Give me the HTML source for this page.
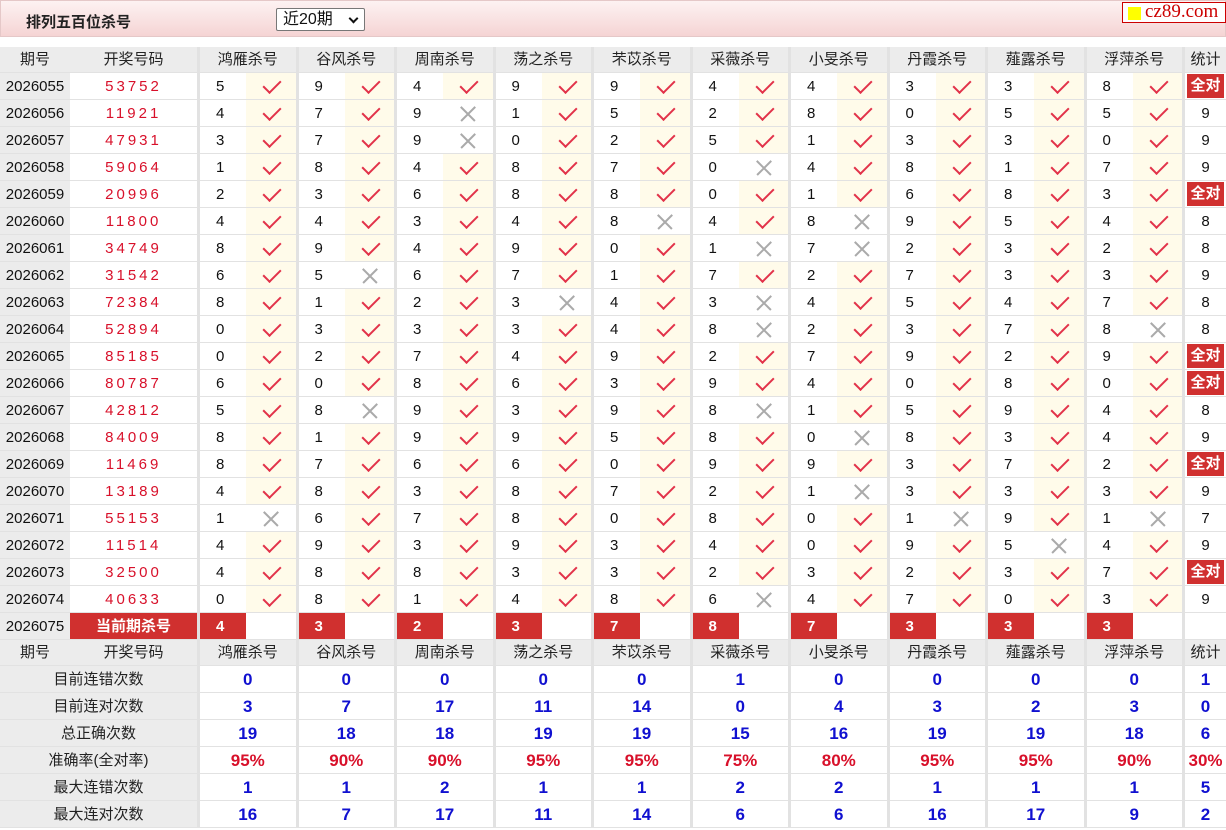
<!DOCTYPE html>
<html><head><meta charset="utf-8"><style>
*{box-sizing:border-box;margin:0;padding:0}
body{width:1226px;height:830px;overflow:hidden;background:#fff;font-family:"Liberation Sans","Noto Sans CJK SC",sans-serif;font-size:15px;color:#111;position:relative}
.top{position:absolute;left:0;top:0;width:1226px;height:37px;background:linear-gradient(#fdf2f2,#f5d4d4);border:1px solid #e5c8c8}
.ttl{position:absolute;left:25px;top:10px;font-weight:bold;font-size:15px;color:#222}
.sel{position:absolute;left:275px;top:7px;width:89px;height:23px;border:1px solid #777;background:#fff;font-size:16px;padding-left:6px;line-height:21px;border-radius:2px}
.sel b{position:absolute;right:7px;top:6px;width:7px;height:7px;border-right:2px solid #111;border-bottom:2px solid #111;transform:rotate(45deg)}
.logo{position:absolute;left:1121px;top:1px;width:104px;height:21px;border:1px solid #c00;background:#fff;font-family:"Liberation Serif",serif;font-size:19px;color:#c00;line-height:18px;padding-left:22px}
.logo i{position:absolute;left:5px;top:4px;width:13px;height:13px;background:#ff0}
.tb{position:absolute;left:0;top:47px;width:1226px}
.r{display:flex;height:27px}
.r>div{height:27px;line-height:27px;text-align:center;border-bottom:1px solid #e2e2e2;position:relative;flex:none}
.h>div{background:#ececec;height:26px;line-height:26px;color:#222}
.h{height:26px}
.q{width:70px;background:#ececec}
.k{width:127px;color:#d8102a;letter-spacing:3px;background:#fff}
.n{width:49px;border-left:3px solid #e2e2e2;text-align:left!important;padding-left:16px}
.c{width:49.5px;background:#fffbea}
.x{width:49.5px;background:#fff}
.r>.t{flex:1;border-left:3px solid #e2e2e2}
.g{width:98.5px;border-left:3px solid #e2e2e2}
.hk{width:127px}
.c::after{content:"";position:absolute;left:21px;top:3px;width:8px;height:15px;border-right:2.5px solid #e2334a;border-bottom:2.5px solid #e2334a;transform:rotate(45deg)}
.x::before,.x::after{content:"";position:absolute;left:15px;top:13px;width:20px;height:1.5px;background:#aaa;transform:rotate(45deg)}
.x::after{transform:rotate(-45deg)}
.qd{display:inline-block;background:#d0302f;color:#fff;font-weight:bold;width:37px;height:24px;line-height:24px;margin-top:1px;vertical-align:top}
.cur .k{background:#d0302f;color:#fff;font-weight:bold;letter-spacing:0;width:130px;border-right:3px solid #e2e2e2}
.cur .n{background:#d0302f;color:#fff;font-weight:bold}
.cur .e{width:49.5px;background:#fff}
.s>div{font-weight:bold;color:#1010d0;font-size:17px}
.s .lb{width:197px;background:#ececec;color:#222;font-weight:normal;font-size:15px}
.s .g,.s .t{background:#fff}
.red>div{color:#d8102a}
</style></head><body>
<div class="top"><div class="ttl">排列五百位杀号</div><div class="sel">近20期<b></b></div><div class="logo"><i></i>cz89.com</div></div>
<div class="tb">
<div class="r h"><div class="q">期号</div><div class="hk">开奖号码</div><div class="g">鸿雁杀号</div><div class="g">谷风杀号</div><div class="g">周南杀号</div><div class="g">荡之杀号</div><div class="g">芣苡杀号</div><div class="g">采薇杀号</div><div class="g">小旻杀号</div><div class="g">丹霞杀号</div><div class="g">薤露杀号</div><div class="g">浮萍杀号</div><div class="t">统计</div></div>
<div class="r"><div class="q">2026055</div><div class="k">53752</div><div class="n">5</div><div class="c"></div><div class="n">9</div><div class="c"></div><div class="n">4</div><div class="c"></div><div class="n">9</div><div class="c"></div><div class="n">9</div><div class="c"></div><div class="n">4</div><div class="c"></div><div class="n">4</div><div class="c"></div><div class="n">3</div><div class="c"></div><div class="n">3</div><div class="c"></div><div class="n">8</div><div class="c"></div><div class="t"><span class="qd">全对</span></div></div>
<div class="r"><div class="q">2026056</div><div class="k">11921</div><div class="n">4</div><div class="c"></div><div class="n">7</div><div class="c"></div><div class="n">9</div><div class="x"></div><div class="n">1</div><div class="c"></div><div class="n">5</div><div class="c"></div><div class="n">2</div><div class="c"></div><div class="n">8</div><div class="c"></div><div class="n">0</div><div class="c"></div><div class="n">5</div><div class="c"></div><div class="n">5</div><div class="c"></div><div class="t">9</div></div>
<div class="r"><div class="q">2026057</div><div class="k">47931</div><div class="n">3</div><div class="c"></div><div class="n">7</div><div class="c"></div><div class="n">9</div><div class="x"></div><div class="n">0</div><div class="c"></div><div class="n">2</div><div class="c"></div><div class="n">5</div><div class="c"></div><div class="n">1</div><div class="c"></div><div class="n">3</div><div class="c"></div><div class="n">3</div><div class="c"></div><div class="n">0</div><div class="c"></div><div class="t">9</div></div>
<div class="r"><div class="q">2026058</div><div class="k">59064</div><div class="n">1</div><div class="c"></div><div class="n">8</div><div class="c"></div><div class="n">4</div><div class="c"></div><div class="n">8</div><div class="c"></div><div class="n">7</div><div class="c"></div><div class="n">0</div><div class="x"></div><div class="n">4</div><div class="c"></div><div class="n">8</div><div class="c"></div><div class="n">1</div><div class="c"></div><div class="n">7</div><div class="c"></div><div class="t">9</div></div>
<div class="r"><div class="q">2026059</div><div class="k">20996</div><div class="n">2</div><div class="c"></div><div class="n">3</div><div class="c"></div><div class="n">6</div><div class="c"></div><div class="n">8</div><div class="c"></div><div class="n">8</div><div class="c"></div><div class="n">0</div><div class="c"></div><div class="n">1</div><div class="c"></div><div class="n">6</div><div class="c"></div><div class="n">8</div><div class="c"></div><div class="n">3</div><div class="c"></div><div class="t"><span class="qd">全对</span></div></div>
<div class="r"><div class="q">2026060</div><div class="k">11800</div><div class="n">4</div><div class="c"></div><div class="n">4</div><div class="c"></div><div class="n">3</div><div class="c"></div><div class="n">4</div><div class="c"></div><div class="n">8</div><div class="x"></div><div class="n">4</div><div class="c"></div><div class="n">8</div><div class="x"></div><div class="n">9</div><div class="c"></div><div class="n">5</div><div class="c"></div><div class="n">4</div><div class="c"></div><div class="t">8</div></div>
<div class="r"><div class="q">2026061</div><div class="k">34749</div><div class="n">8</div><div class="c"></div><div class="n">9</div><div class="c"></div><div class="n">4</div><div class="c"></div><div class="n">9</div><div class="c"></div><div class="n">0</div><div class="c"></div><div class="n">1</div><div class="x"></div><div class="n">7</div><div class="x"></div><div class="n">2</div><div class="c"></div><div class="n">3</div><div class="c"></div><div class="n">2</div><div class="c"></div><div class="t">8</div></div>
<div class="r"><div class="q">2026062</div><div class="k">31542</div><div class="n">6</div><div class="c"></div><div class="n">5</div><div class="x"></div><div class="n">6</div><div class="c"></div><div class="n">7</div><div class="c"></div><div class="n">1</div><div class="c"></div><div class="n">7</div><div class="c"></div><div class="n">2</div><div class="c"></div><div class="n">7</div><div class="c"></div><div class="n">3</div><div class="c"></div><div class="n">3</div><div class="c"></div><div class="t">9</div></div>
<div class="r"><div class="q">2026063</div><div class="k">72384</div><div class="n">8</div><div class="c"></div><div class="n">1</div><div class="c"></div><div class="n">2</div><div class="c"></div><div class="n">3</div><div class="x"></div><div class="n">4</div><div class="c"></div><div class="n">3</div><div class="x"></div><div class="n">4</div><div class="c"></div><div class="n">5</div><div class="c"></div><div class="n">4</div><div class="c"></div><div class="n">7</div><div class="c"></div><div class="t">8</div></div>
<div class="r"><div class="q">2026064</div><div class="k">52894</div><div class="n">0</div><div class="c"></div><div class="n">3</div><div class="c"></div><div class="n">3</div><div class="c"></div><div class="n">3</div><div class="c"></div><div class="n">4</div><div class="c"></div><div class="n">8</div><div class="x"></div><div class="n">2</div><div class="c"></div><div class="n">3</div><div class="c"></div><div class="n">7</div><div class="c"></div><div class="n">8</div><div class="x"></div><div class="t">8</div></div>
<div class="r"><div class="q">2026065</div><div class="k">85185</div><div class="n">0</div><div class="c"></div><div class="n">2</div><div class="c"></div><div class="n">7</div><div class="c"></div><div class="n">4</div><div class="c"></div><div class="n">9</div><div class="c"></div><div class="n">2</div><div class="c"></div><div class="n">7</div><div class="c"></div><div class="n">9</div><div class="c"></div><div class="n">2</div><div class="c"></div><div class="n">9</div><div class="c"></div><div class="t"><span class="qd">全对</span></div></div>
<div class="r"><div class="q">2026066</div><div class="k">80787</div><div class="n">6</div><div class="c"></div><div class="n">0</div><div class="c"></div><div class="n">8</div><div class="c"></div><div class="n">6</div><div class="c"></div><div class="n">3</div><div class="c"></div><div class="n">9</div><div class="c"></div><div class="n">4</div><div class="c"></div><div class="n">0</div><div class="c"></div><div class="n">8</div><div class="c"></div><div class="n">0</div><div class="c"></div><div class="t"><span class="qd">全对</span></div></div>
<div class="r"><div class="q">2026067</div><div class="k">42812</div><div class="n">5</div><div class="c"></div><div class="n">8</div><div class="x"></div><div class="n">9</div><div class="c"></div><div class="n">3</div><div class="c"></div><div class="n">9</div><div class="c"></div><div class="n">8</div><div class="x"></div><div class="n">1</div><div class="c"></div><div class="n">5</div><div class="c"></div><div class="n">9</div><div class="c"></div><div class="n">4</div><div class="c"></div><div class="t">8</div></div>
<div class="r"><div class="q">2026068</div><div class="k">84009</div><div class="n">8</div><div class="c"></div><div class="n">1</div><div class="c"></div><div class="n">9</div><div class="c"></div><div class="n">9</div><div class="c"></div><div class="n">5</div><div class="c"></div><div class="n">8</div><div class="c"></div><div class="n">0</div><div class="x"></div><div class="n">8</div><div class="c"></div><div class="n">3</div><div class="c"></div><div class="n">4</div><div class="c"></div><div class="t">9</div></div>
<div class="r"><div class="q">2026069</div><div class="k">11469</div><div class="n">8</div><div class="c"></div><div class="n">7</div><div class="c"></div><div class="n">6</div><div class="c"></div><div class="n">6</div><div class="c"></div><div class="n">0</div><div class="c"></div><div class="n">9</div><div class="c"></div><div class="n">9</div><div class="c"></div><div class="n">3</div><div class="c"></div><div class="n">7</div><div class="c"></div><div class="n">2</div><div class="c"></div><div class="t"><span class="qd">全对</span></div></div>
<div class="r"><div class="q">2026070</div><div class="k">13189</div><div class="n">4</div><div class="c"></div><div class="n">8</div><div class="c"></div><div class="n">3</div><div class="c"></div><div class="n">8</div><div class="c"></div><div class="n">7</div><div class="c"></div><div class="n">2</div><div class="c"></div><div class="n">1</div><div class="x"></div><div class="n">3</div><div class="c"></div><div class="n">3</div><div class="c"></div><div class="n">3</div><div class="c"></div><div class="t">9</div></div>
<div class="r"><div class="q">2026071</div><div class="k">55153</div><div class="n">1</div><div class="x"></div><div class="n">6</div><div class="c"></div><div class="n">7</div><div class="c"></div><div class="n">8</div><div class="c"></div><div class="n">0</div><div class="c"></div><div class="n">8</div><div class="c"></div><div class="n">0</div><div class="c"></div><div class="n">1</div><div class="x"></div><div class="n">9</div><div class="c"></div><div class="n">1</div><div class="x"></div><div class="t">7</div></div>
<div class="r"><div class="q">2026072</div><div class="k">11514</div><div class="n">4</div><div class="c"></div><div class="n">9</div><div class="c"></div><div class="n">3</div><div class="c"></div><div class="n">9</div><div class="c"></div><div class="n">3</div><div class="c"></div><div class="n">4</div><div class="c"></div><div class="n">0</div><div class="c"></div><div class="n">9</div><div class="c"></div><div class="n">5</div><div class="x"></div><div class="n">4</div><div class="c"></div><div class="t">9</div></div>
<div class="r"><div class="q">2026073</div><div class="k">32500</div><div class="n">4</div><div class="c"></div><div class="n">8</div><div class="c"></div><div class="n">8</div><div class="c"></div><div class="n">3</div><div class="c"></div><div class="n">3</div><div class="c"></div><div class="n">2</div><div class="c"></div><div class="n">3</div><div class="c"></div><div class="n">2</div><div class="c"></div><div class="n">3</div><div class="c"></div><div class="n">7</div><div class="c"></div><div class="t"><span class="qd">全对</span></div></div>
<div class="r"><div class="q">2026074</div><div class="k">40633</div><div class="n">0</div><div class="c"></div><div class="n">8</div><div class="c"></div><div class="n">1</div><div class="c"></div><div class="n">4</div><div class="c"></div><div class="n">8</div><div class="c"></div><div class="n">6</div><div class="x"></div><div class="n">4</div><div class="c"></div><div class="n">7</div><div class="c"></div><div class="n">0</div><div class="c"></div><div class="n">3</div><div class="c"></div><div class="t">9</div></div>
<div class="r cur"><div class="q">2026075</div><div class="k">当前期杀号</div><div class="n" style="border-left:0;width:46px">4</div><div class="e"></div><div class="n">3</div><div class="e"></div><div class="n">2</div><div class="e"></div><div class="n">3</div><div class="e"></div><div class="n">7</div><div class="e"></div><div class="n">8</div><div class="e"></div><div class="n">7</div><div class="e"></div><div class="n">3</div><div class="e"></div><div class="n">3</div><div class="e"></div><div class="n">3</div><div class="e"></div><div class="t"></div></div>
<div class="r h"><div class="q">期号</div><div class="hk">开奖号码</div><div class="g">鸿雁杀号</div><div class="g">谷风杀号</div><div class="g">周南杀号</div><div class="g">荡之杀号</div><div class="g">芣苡杀号</div><div class="g">采薇杀号</div><div class="g">小旻杀号</div><div class="g">丹霞杀号</div><div class="g">薤露杀号</div><div class="g">浮萍杀号</div><div class="t">统计</div></div>
<div class="r s"><div class="lb">目前连错次数</div><div class="g">0</div><div class="g">0</div><div class="g">0</div><div class="g">0</div><div class="g">0</div><div class="g">1</div><div class="g">0</div><div class="g">0</div><div class="g">0</div><div class="g">0</div><div class="t">1</div></div>
<div class="r s"><div class="lb">目前连对次数</div><div class="g">3</div><div class="g">7</div><div class="g">17</div><div class="g">11</div><div class="g">14</div><div class="g">0</div><div class="g">4</div><div class="g">3</div><div class="g">2</div><div class="g">3</div><div class="t">0</div></div>
<div class="r s"><div class="lb">总正确次数</div><div class="g">19</div><div class="g">18</div><div class="g">18</div><div class="g">19</div><div class="g">19</div><div class="g">15</div><div class="g">16</div><div class="g">19</div><div class="g">19</div><div class="g">18</div><div class="t">6</div></div>
<div class="r s red"><div class="lb">准确率(全对率)</div><div class="g">95%</div><div class="g">90%</div><div class="g">90%</div><div class="g">95%</div><div class="g">95%</div><div class="g">75%</div><div class="g">80%</div><div class="g">95%</div><div class="g">95%</div><div class="g">90%</div><div class="t">30%</div></div>
<div class="r s"><div class="lb">最大连错次数</div><div class="g">1</div><div class="g">1</div><div class="g">2</div><div class="g">1</div><div class="g">1</div><div class="g">2</div><div class="g">2</div><div class="g">1</div><div class="g">1</div><div class="g">1</div><div class="t">5</div></div>
<div class="r s"><div class="lb">最大连对次数</div><div class="g">16</div><div class="g">7</div><div class="g">17</div><div class="g">11</div><div class="g">14</div><div class="g">6</div><div class="g">6</div><div class="g">16</div><div class="g">17</div><div class="g">9</div><div class="t">2</div></div>
</div>
</body></html>
